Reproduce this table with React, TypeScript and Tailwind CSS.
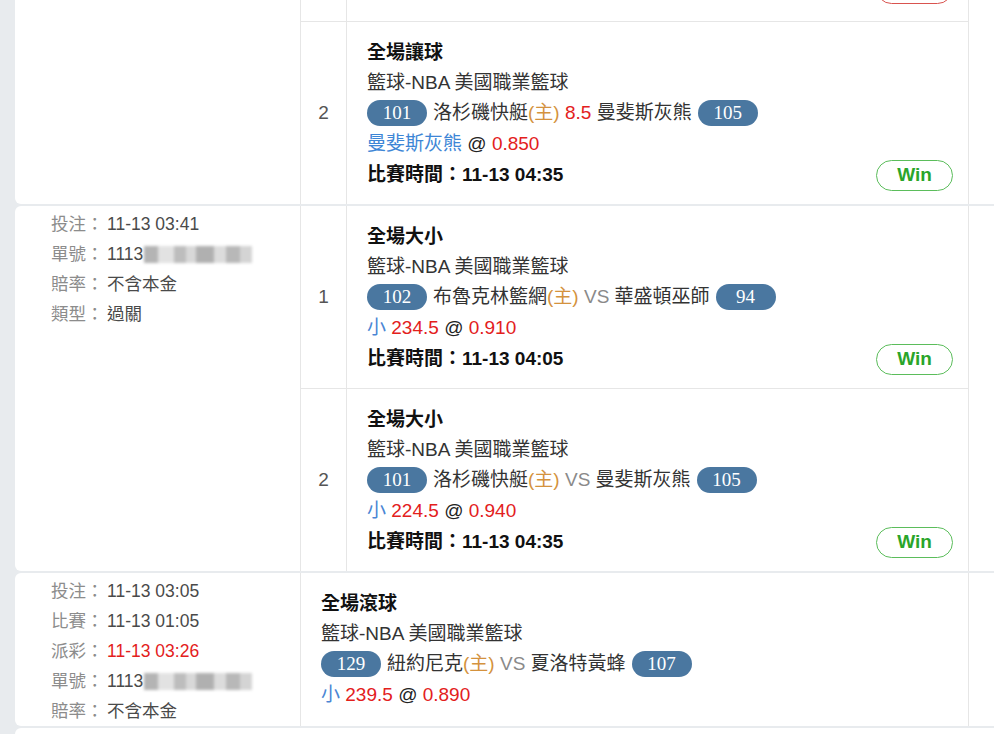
import React from 'react';

type Leg = {
  title: string;
  home: [string, string];
  away: [string, string];
  mid: React.ReactNode;
  pick: React.ReactNode;
  time?: string;
  result?: 'Win' | 'Lose';
};

const Pill = ({ n }: { n: string }) => (
  <span className="inline-flex h-[26px] w-[60px] shrink-0 items-center justify-center rounded-full bg-[#4a77a0] font-['Liberation_Serif',serif] text-[19px] text-white">
    {n}
  </span>
);

// blurred order number, as in the screenshot
const Blur = () => (
  <span className="ml-[1px] inline-flex h-[17px] w-[108px] items-center blur-[1.5px]">
    <span className="h-full w-[14px] bg-[#b4b4b4]" />
    <span className="h-full w-[16px] bg-[#e2e2e2]" />
    <span className="h-full w-[12px] bg-[#bdbdbd]" />
    <span className="h-full w-[10px] bg-[#d8d8d8]" />
    <span className="h-full w-[18px] bg-[#b0b0b0]" />
    <span className="h-full w-[12px] bg-[#dcdcdc]" />
    <span className="h-full w-[14px] bg-[#b8b8b8]" />
    <span className="h-full w-[12px] bg-[#d4d4d4]" />
  </span>
);

const Info = ({ rows }: { rows: { k: string; v: React.ReactNode; red?: boolean }[] }) => (
  <div className="w-[285px] shrink-0 pl-[36px] pt-[3px] text-[17.5px] leading-[30px]">
    {rows.map((r) => (
      <div key={r.k} className="flex items-center">
        <span className="w-[56px] shrink-0 text-[#8c8c8c]">{r.k}：</span>
        <span className={r.red ? 'text-[#e3201c]' : 'text-[#4a4a4a]'}>{r.v}</span>
      </div>
    ))}
  </div>
);

const LegBody = ({ leg }: { leg: Leg }) => (
  <div className="flex-1 pb-[14px] pl-5 pr-[15px] pt-[16px] text-[19px] text-[#333]">
    <div className="h-[30px] font-bold leading-[30px] text-[#111]">{leg.title}</div>
    <div className="h-[30px] leading-[30px]">籃球-NBA 美國職業籃球</div>
    <div className="flex h-[30px] items-center gap-[6px]">
      <Pill n={leg.home[1]} />
      <span>
        {leg.home[0]}
        <span className="text-[#d4923e]">(主)</span> {leg.mid} {leg.away[0]}
      </span>
      <Pill n={leg.away[1]} />
    </div>
    <div className="h-[32px] leading-[32px]">{leg.pick}</div>
    {leg.time && (
      <div className="flex h-[30px] items-center justify-between">
        <span className="font-bold text-[#111]">比賽時間：{leg.time}</span>
        {leg.result && (
          <span className="inline-flex h-[31px] w-[77px] items-center justify-center rounded-full border border-[#5bbd5b] text-[19px] font-bold text-[#2aa52a]">
            {leg.result}
          </span>
        )}
      </div>
    )}
  </div>
);

const red = (t: string) => <span className="text-[#e3201c]">{t}</span>;
const small = (a: string, b: string) => (
  <>
    <span className="text-[#4a86d4]">小</span> {red(a)} <span className="text-[#222]">@</span> {red(b)}
  </>
);

const card1Leg: Leg = {
  title: '全場讓球',
  home: ['洛杉磯快艇', '101'],
  away: ['曼斐斯灰熊', '105'],
  mid: red('8.5'),
  pick: (
    <>
      <span className="text-[#3d86d6]">曼斐斯灰熊</span> <span className="text-[#222]">@</span> {red('0.850')}
    </>
  ),
  time: '11-13 04:35',
  result: 'Win',
};

const vs = <span className="text-[#8a8a8a]">VS</span>;

const card2Legs: Leg[] = [
  {
    title: '全場大小',
    home: ['布魯克林籃網', '102'],
    away: ['華盛頓巫師', '94'],
    mid: vs,
    pick: small('234.5', '0.910'),
    time: '11-13 04:05',
    result: 'Win',
  },
  {
    title: '全場大小',
    home: ['洛杉磯快艇', '101'],
    away: ['曼斐斯灰熊', '105'],
    mid: vs,
    pick: small('224.5', '0.940'),
    time: '11-13 04:35',
    result: 'Win',
  },
];

const card3Leg: Leg = {
  title: '全場滾球',
  home: ['紐約尼克', '129'],
  away: ['夏洛特黃蜂', '107'],
  mid: vs,
  pick: small('239.5', '0.890'),
};

const LegRow = ({ n, leg, last }: { n: number; leg: Leg; last?: boolean }) => (
  <div className={`flex ${last ? '' : 'border-b border-[#e6e6e6]'}`}>
    <div className="flex w-[46px] shrink-0 items-center justify-center border-r border-[#e6e6e6] text-[19px] text-[#555]">
      {n}
    </div>
    <LegBody leg={leg} />
  </div>
);

export default function App() {
  return (
    <div className="h-[734px] w-full overflow-hidden bg-[#e8ebee] pl-[15px] font-['Liberation_Sans','Noto_Sans_CJK_TC',sans-serif]">
      {/* card 1, top cut off */}
      <div className="mb-[2px] flex rounded-bl-[6px] bg-white">
        <div className="w-[285px] shrink-0" />
        <div className="flex w-[669px] shrink-0 flex-col border-x border-[#e6e6e6]">
          <div className="flex h-[22px] border-b border-[#e6e6e6]">
            <div className="w-[46px] shrink-0 border-r border-[#e6e6e6]" />
            <div className="flex flex-1 items-end justify-end overflow-hidden pr-[15px]">
              <span className="mb-[17px] h-[31px] w-[77px] shrink-0 rounded-full border border-[#d9534f]" />
            </div>
          </div>
          <LegRow n={2} leg={card1Leg} last />
        </div>
        <div className="flex-1" />
      </div>

      {/* card 2 */}
      <div className="mb-[2px] flex rounded-l-[6px] bg-white">
        <Info
          rows={[
            { k: '投注', v: '11-13 03:41' },
            { k: '單號', v: <span className="inline-flex items-center">1113<Blur /></span> },
            { k: '賠率', v: '不含本金' },
            { k: '類型', v: '過關' },
          ]}
        />
        <div className="flex w-[669px] shrink-0 flex-col border-x border-[#e6e6e6]">
          {card2Legs.map((l, i) => (
            <LegRow key={i} n={i + 1} leg={l} last={i === card2Legs.length - 1} />
          ))}
        </div>
        <div className="flex-1" />
      </div>

      {/* card 3 */}
      <div className="mb-[2px] flex rounded-l-[6px] bg-white">
        <Info
          rows={[
            { k: '投注', v: '11-13 03:05' },
            { k: '比賽', v: '11-13 01:05' },
            { k: '派彩', v: '11-13 03:26', red: true },
            { k: '單號', v: <span className="inline-flex items-center">1113<Blur /></span> },
            { k: '賠率', v: '不含本金' },
          ]}
        />
        <div className="flex w-[669px] shrink-0 flex-col border-x border-[#e6e6e6]">
          <LegBody leg={card3Leg} />
        </div>
        <div className="flex-1" />
      </div>
      <div className="h-[40px] rounded-l-[6px] bg-white" />
    </div>
  );
}
